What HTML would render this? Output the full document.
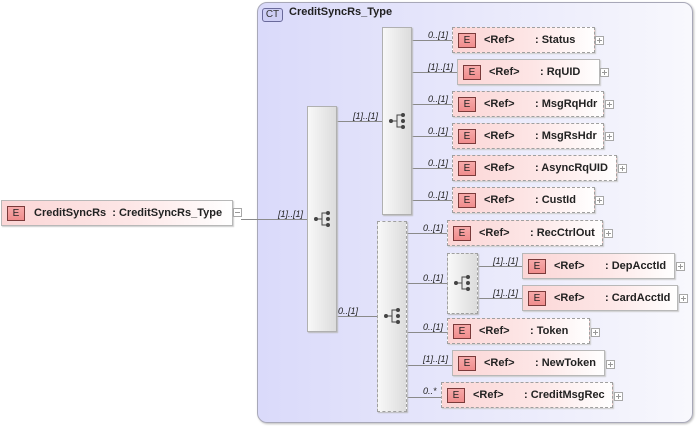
<!DOCTYPE html>
<html><head><meta charset="utf-8"><style>
*{margin:0;padding:0;box-sizing:border-box}
body{width:697px;height:426px;background:#fff;position:relative;overflow:hidden;font-family:"Liberation Sans",Arial,sans-serif}
.ct{position:absolute;left:257px;top:2px;width:436px;height:421px;border:1px solid #a8a8b8;border-radius:10px;background:linear-gradient(90deg,#dadafa 0%,#e8e8fb 50%,#f8f8fd 100%);box-shadow:1px 1px 2px #bbb}
.ctb{position:absolute;left:262px;top:8px;width:21px;height:14px;border:1px solid #6a6a9a;border-radius:3px;background:#cfcff5;font-size:10px;text-align:center;line-height:12px;color:#333}
.ctt{position:absolute;left:289px;top:6px;font-size:11px;font-weight:bold;color:#222}
.el{position:absolute;height:26px;background:linear-gradient(90deg,#fbd6d6 0%,#fde6e6 55%,#fff 100%);border:1px solid #b8b8b8;box-shadow:1px 1px 1px #ccc;font-size:11px;font-weight:bold;color:#222;white-space:nowrap}
.el.d{border:1px dashed #a0a0a0}
.eb{position:absolute;left:5px;top:5px;width:18px;height:15px;border:1px solid #7a3a3a;background:linear-gradient(180deg,#f7a9a9,#f08d8d);font-size:10px;font-weight:normal;text-align:center;line-height:13px;color:#222}
.r{position:absolute;left:31px;top:6px}
.n{position:absolute;top:6px}
.pl{position:absolute;width:9px;height:9px;border:1px solid #a8a8a8;background:#fff}
.pl:before{content:"";position:absolute;left:1px;top:3px;width:5px;height:1px;background:#999}
.pl:after{content:"";position:absolute;left:3px;top:1px;width:1px;height:5px;background:#999}
.pl.m:after{display:none}
.sq{position:absolute;background:linear-gradient(90deg,#f8f8f8,#dcdcdc);border:1px solid #b0b0b0;box-shadow:1px 1px 1px #bbb}
.sq.d{border:1px dashed #a0a0a0}
.lb{position:absolute;font-size:9px;font-style:italic;color:#222}
svg{position:absolute;left:0;top:0}
</style></head><body>
<div class="ct"></div>
<div class="ctb">CT</div>
<div class="ctt">CreditSyncRs_Type</div>

<svg width="697" height="426">
<g stroke="#8a8a8a" stroke-width="1" fill="none">
<line x1="241" y1="219.5" x2="307" y2="219.5"/>
<line x1="336" y1="121.5" x2="382" y2="121.5"/>
<line x1="336" y1="316.5" x2="377" y2="316.5"/>
<line x1="411" y1="40.5" x2="452" y2="40.5"/>
<line x1="411" y1="72.5" x2="457" y2="72.5"/>
<line x1="411" y1="104.5" x2="452" y2="104.5"/>
<line x1="411" y1="136.5" x2="452" y2="136.5"/>
<line x1="411" y1="168.5" x2="452" y2="168.5"/>
<line x1="411" y1="200.5" x2="452" y2="200.5"/>
<line x1="406" y1="233.5" x2="447" y2="233.5"/>
<line x1="406" y1="283.5" x2="447" y2="283.5"/>
<line x1="477" y1="266.5" x2="522" y2="266.5"/>
<line x1="477" y1="298.5" x2="522" y2="298.5"/>
<line x1="406" y1="332.5" x2="447" y2="332.5"/>
<line x1="406" y1="365.5" x2="452" y2="365.5"/>
<line x1="406" y1="397.5" x2="441" y2="397.5"/>
</g>
</svg>

<div class="sq" style="left:307px;top:106px;width:30px;height:226px"></div>
<div class="sq" style="left:382px;top:27px;width:30px;height:188px"></div>
<div class="sq d" style="left:377px;top:221px;width:30px;height:191px"></div>
<div class="sq d" style="left:447px;top:253px;width:31px;height:61px"></div>

<svg width="697" height="426">
<defs><g id="ic" fill="#444" stroke="#444" stroke-width="1"><circle cx="0" cy="0" r="2" stroke="none"/><line x1="0" y1="0" x2="6" y2="0"/><polyline points="12,-6 6,-6 6,6 12,6" fill="none"/><circle cx="12" cy="-6" r="2" stroke="none"/><circle cx="12" cy="0" r="2" stroke="none"/><circle cx="12" cy="6" r="2" stroke="none"/></g></defs>
<use href="#ic" x="316" y="219"/>
<use href="#ic" x="391" y="121"/>
<use href="#ic" x="386" y="316"/>
<use href="#ic" x="456" y="283"/>
</svg>

<div class="el" style="left:1px;top:200px;width:232px"><div class="eb">E</div><span class="r" style="left:32px">CreditSyncRs&nbsp; : CreditSyncRs_Type</span></div>
<div class="pl m" style="left:233px;top:208px"></div>

<div class="lb" style="left:278px;top:209px">[1]..[1]</div>
<div class="lb" style="left:353px;top:111px">[1]..[1]</div>
<div class="lb" style="left:338px;top:306px">0..[1]</div>

<div class="lb" style="left:428px;top:30px">0..[1]</div>
<div class="el d" style="left:452px;top:27px;width:143px"><div class="eb">E</div><span class="r">&lt;Ref&gt;</span><span class="n" style="left:82px">: Status</span></div>
<div class="pl" style="left:595px;top:36px"></div>

<div class="lb" style="left:428px;top:62px">[1]..[1]</div>
<div class="el" style="left:457px;top:59px;width:143px"><div class="eb">E</div><span class="r">&lt;Ref&gt;</span><span class="n" style="left:82px">: RqUID</span></div>
<div class="pl" style="left:600px;top:68px"></div>

<div class="lb" style="left:428px;top:94px">0..[1]</div>
<div class="el d" style="left:452px;top:91px;width:152px"><div class="eb">E</div><span class="r">&lt;Ref&gt;</span><span class="n" style="left:82px">: MsgRqHdr</span></div>
<div class="pl" style="left:605px;top:100px"></div>

<div class="lb" style="left:428px;top:126px">0..[1]</div>
<div class="el d" style="left:452px;top:123px;width:152px"><div class="eb">E</div><span class="r">&lt;Ref&gt;</span><span class="n" style="left:82px">: MsgRsHdr</span></div>
<div class="pl" style="left:605px;top:132px"></div>

<div class="lb" style="left:428px;top:158px">0..[1]</div>
<div class="el d" style="left:452px;top:155px;width:165px"><div class="eb">E</div><span class="r">&lt;Ref&gt;</span><span class="n" style="left:82px">: AsyncRqUID</span></div>
<div class="pl" style="left:618px;top:164px"></div>

<div class="lb" style="left:428px;top:190px">0..[1]</div>
<div class="el d" style="left:452px;top:187px;width:143px"><div class="eb">E</div><span class="r">&lt;Ref&gt;</span><span class="n" style="left:82px">: CustId</span></div>
<div class="pl" style="left:595px;top:196px"></div>

<div class="lb" style="left:423px;top:223px">0..[1]</div>
<div class="el d" style="left:447px;top:220px;width:156px"><div class="eb">E</div><span class="r">&lt;Ref&gt;</span><span class="n" style="left:82px">: RecCtrlOut</span></div>
<div class="pl" style="left:604px;top:229px"></div>

<div class="lb" style="left:423px;top:273px">0..[1]</div>

<div class="lb" style="left:493px;top:256px">[1]..[1]</div>
<div class="el" style="left:522px;top:253px;width:153px"><div class="eb">E</div><span class="r">&lt;Ref&gt;</span><span class="n" style="left:82px">: DepAcctId</span></div>
<div class="pl" style="left:676px;top:262px"></div>

<div class="lb" style="left:493px;top:288px">[1]..[1]</div>
<div class="el" style="left:522px;top:285px;width:156px"><div class="eb">E</div><span class="r">&lt;Ref&gt;</span><span class="n" style="left:82px">: CardAcctId</span></div>
<div class="pl" style="left:679px;top:294px"></div>

<div class="lb" style="left:423px;top:322px">0..[1]</div>
<div class="el d" style="left:447px;top:318px;width:143px"><div class="eb">E</div><span class="r">&lt;Ref&gt;</span><span class="n" style="left:82px">: Token</span></div>
<div class="pl" style="left:591px;top:328px"></div>

<div class="lb" style="left:423px;top:354px">[1]..[1]</div>
<div class="el" style="left:452px;top:350px;width:153px"><div class="eb">E</div><span class="r">&lt;Ref&gt;</span><span class="n" style="left:82px">: NewToken</span></div>
<div class="pl" style="left:606px;top:360px"></div>

<div class="lb" style="left:423px;top:386px">0..*</div>
<div class="el d" style="left:441px;top:382px;width:172px"><div class="eb">E</div><span class="r">&lt;Ref&gt;</span><span class="n" style="left:82px">: CreditMsgRec</span></div>
<div class="pl" style="left:614px;top:392px"></div>
</body></html>
